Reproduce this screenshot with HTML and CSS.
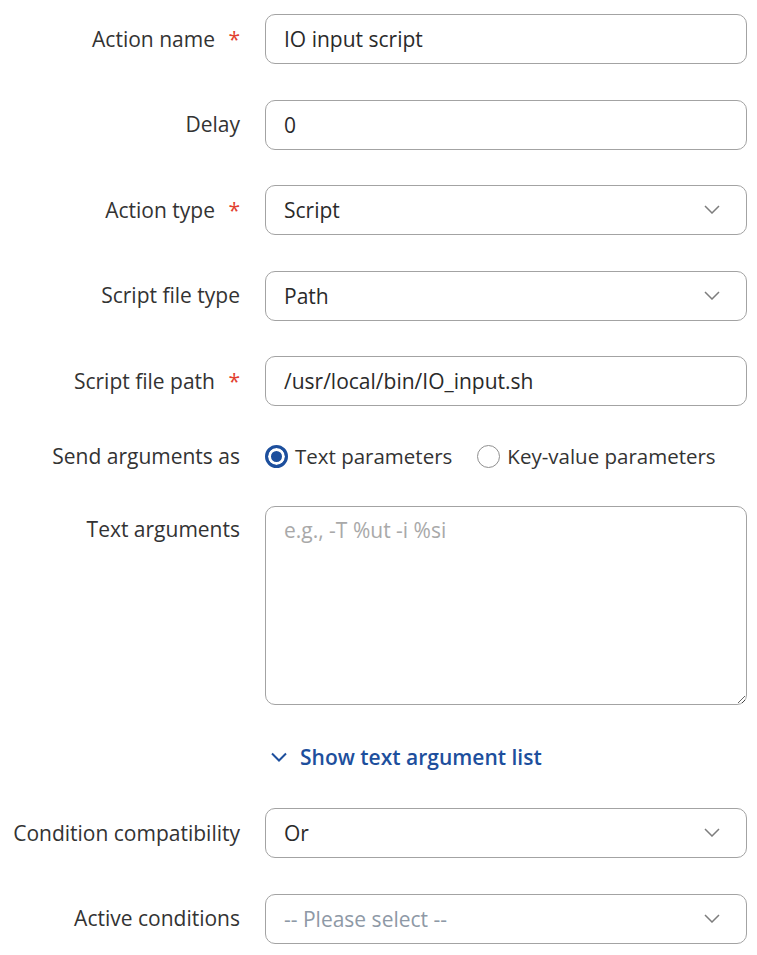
FILE: index.html
```html
<!DOCTYPE html>
<html lang="en">
<head>
    <meta charset="UTF-8">
    <meta name="viewport" content="width=device-width, initial-scale=1.0">
    <title>Action settings</title>
    <link rel="stylesheet" href="styles.css">
</head>
<body>
    <form class="action-form">
        <label class="field-label" for="action_name">Action name <span class="req">*</span></label>
        <input class="field-input" type="text" id="action_name" value="IO input script">

        <label class="field-label" for="delay">Delay</label>
        <input class="field-input" type="text" id="delay" value="0">

        <label class="field-label" for="action_type">Action type <span class="req">*</span></label>
        <div class="select-wrap">
            <select class="field-input field-select" id="action_type">
                <option>Script</option>
            </select>
            <svg class="chevron" width="16" height="9" viewBox="0 0 16 9"><path d="M1 1l7 7 7-7" fill="none" stroke="#7d7d7d" stroke-width="1.5"/></svg>
        </div>

        <label class="field-label" for="script_type">Script file type</label>
        <div class="select-wrap">
            <select class="field-input field-select" id="script_type">
                <option>Path</option>
            </select>
            <svg class="chevron" width="16" height="9" viewBox="0 0 16 9"><path d="M1 1l7 7 7-7" fill="none" stroke="#7d7d7d" stroke-width="1.5"/></svg>
        </div>

        <label class="field-label" for="script_path">Script file path <span class="req">*</span></label>
        <input class="field-input" type="text" id="script_path" value="/usr/local/bin/IO_input.sh">

        <label class="field-label field-short">Send arguments as</label>
        <div class="radio-group">
            <label class="radio-option"><input type="radio" name="args_as" checked> Text parameters</label>
            <label class="radio-option"><input type="radio" name="args_as"> Key-value parameters</label>
        </div>

        <label class="field-label field-top" for="text_args">Text arguments</label>
        <textarea class="field-input field-area" id="text_args" placeholder="e.g., -T %ut -i %si"></textarea>

        <div class="field-label field-link"></div>
        <div class="show-list">
            <svg width="16" height="10" viewBox="0 0 16 10"><path d="M1 1.5l7 7 7-7" fill="none" stroke="#1d4f9d" stroke-width="2"/></svg>
            <a href="#" class="show-link">Show text argument list</a>
        </div>

        <label class="field-label" for="compat">Condition compatibility</label>
        <div class="select-wrap">
            <select class="field-input field-select" id="compat">
                <option>Or</option>
            </select>
            <svg class="chevron" width="16" height="9" viewBox="0 0 16 9"><path d="M1 1l7 7 7-7" fill="none" stroke="#7d7d7d" stroke-width="1.5"/></svg>
        </div>

        <label class="field-label" for="conditions">Active conditions</label>
        <div class="select-wrap">
            <select class="field-input field-select placeholder" id="conditions">
                <option>-- Please select --</option>
            </select>
            <svg class="chevron" width="16" height="9" viewBox="0 0 16 9"><path d="M1 1l7 7 7-7" fill="none" stroke="#7d7d7d" stroke-width="1.5"/></svg>
        </div>
    </form>
</body>
</html>
```

FILE: styles.css
```css
body {
    margin: 0;
    font-family: "Open Sans", "DejaVu Sans", sans-serif;
    font-size: 21px;
    color: #333;
    background-color: #fff;
}
.action-form {
    display: grid;
    grid-template-columns: 240px 482px;
    column-gap: 25px;
    row-gap: 35.5px;
    align-items: center;
    padding-top: 14px;
}
.field-label {
    text-align: right;
    line-height: 27px;
    color: #333;
}
.field-short {
    height: 29px;
    line-height: 29px;
}
.field-link {
    height: 32px;
}
.field-top {
    align-self: start;
    padding-top: 10px;
}
.req {
    color: #e2402f;
    margin-left: 8px;
}
.field-input {
    box-sizing: border-box;
    width: 100%;
    height: 50px;
    padding: 0 18px;
    border: 1px solid #a3a3a3;
    border-radius: 10px;
    background-color: #fff;
    font-family: inherit;
    font-size: 21px;
    color: #2a2a2a;
    outline: none;
}
.select-wrap {
    position: relative;
}
.field-select {
    appearance: none;
    -webkit-appearance: none;
    padding-right: 50px;
}
.field-select.placeholder {
    color: #8e99a6;
}
.chevron {
    position: absolute;
    right: 27px;
    top: 20px;
    pointer-events: none;
}
.radio-group {
    display: flex;
    align-items: center;
    gap: 25px;
    height: 29px;
}
.radio-option {
    display: flex;
    align-items: center;
    gap: 7px;
    font-size: 20.5px;
    color: #333;
}
.radio-option input {
    appearance: none;
    -webkit-appearance: none;
    margin: 0;
    width: 23px;
    height: 23px;
    border: 1px solid #8f8f8f;
    border-radius: 50%;
    background-color: #fff;
}
.radio-option input:checked {
    border: 3px solid #1d4f9d;
    box-shadow: inset 0 0 0 3px #fff;
    background-color: #1d4f9d;
}
.field-area {
    height: 199px;
    padding: 10px 18px;
    line-height: 27px;
    resize: both;
}
.field-area::placeholder {
    color: #a9a9a9;
}
.show-list {
    display: flex;
    align-items: center;
    height: 32px;
    padding-left: 6px;
    gap: 13px;
}
.show-link {
    color: #1d4f9d;
    font-weight: 600;
    text-decoration: none;
}
```
